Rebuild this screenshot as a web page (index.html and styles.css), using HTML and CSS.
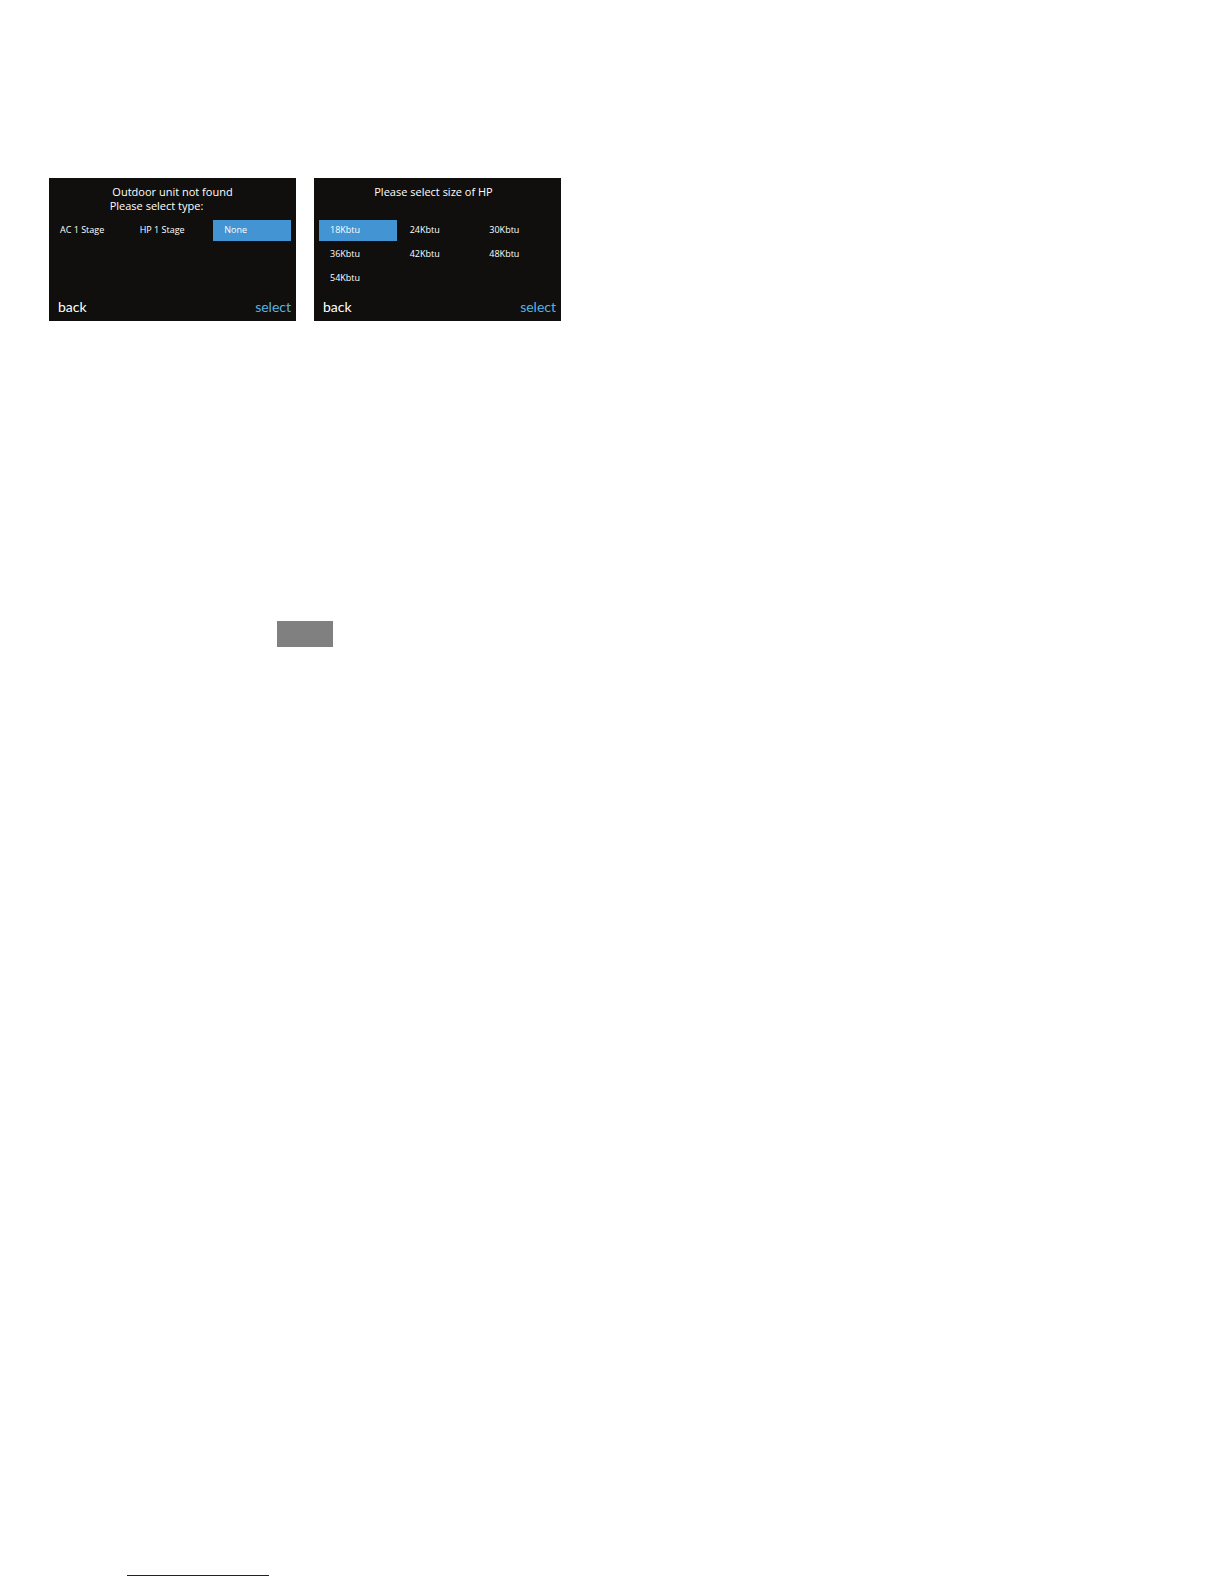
FILE: index.html
```html
<!DOCTYPE html>
<html lang="en">
<head>
<meta charset="UTF-8">
<meta name="viewport" content="width=device-width, initial-scale=1.0">
<title>Outdoor unit setup</title>
<link rel="stylesheet" href="styles.css">
</head>
<body>
<main>
  <div class="screens">
    <section class="screen">
      <h2 class="title">Outdoor unit not found<span class="second-line">Please select type:</span></h2>
      <div class="options type-options">
        <button type="button">AC 1 Stage</button>
        <button type="button">HP 1 Stage</button>
        <button type="button" class="selected">None</button>
      </div>
      <div class="actions">
        <button type="button">back</button>
        <button type="button" class="select">select</button>
      </div>
    </section>
    <section class="screen">
      <h2 class="title size-title">Please select size of HP</h2>
      <div class="options">
        <button type="button" class="selected">18Kbtu</button>
        <button type="button">24Kbtu</button>
        <button type="button">30Kbtu</button>
        <button type="button">36Kbtu</button>
        <button type="button">42Kbtu</button>
        <button type="button">48Kbtu</button>
        <button type="button">54Kbtu</button>
      </div>
      <div class="actions">
        <button type="button">back</button>
        <button type="button" class="select">select</button>
      </div>
    </section>
  </div>
  <div class="gray-box"></div>
</main>
<footer>
  <div class="footer-line"></div>
</footer>
</body>
</html>
```

FILE: styles.css
```css
* {
  box-sizing: border-box;
}
body {
  margin: 0;
  min-height: 100vh;
  display: flex;
  flex-direction: column;
  justify-content: space-between;
  background-color: #fff;
  font-family: "Open Sans", "Noto Sans", sans-serif;
}
main {
  padding: 178px 49px 0;
}
.screens {
  display: flex;
  flex-wrap: wrap;
  gap: 18px;
}
/* Thermostat screens */
.screen {
  width: 247px;
  min-height: 143px;
  padding: 7px 5px 5px;
  display: flex;
  flex-direction: column;
  background-color: #100f0d;
  color: #fff;
}
.title {
  margin: 0;
  min-height: 35px;
  font-size: 11px;
  font-weight: 400;
  line-height: 14px;
  text-align: center;
}
.second-line {
  display: block;
  padding-right: 32px;
}
.size-title {
  padding-right: 8px;
}
button {
  padding: 0;
  border: none;
  background: none;
  color: inherit;
  font-family: inherit;
  cursor: pointer;
}
.options {
  display: grid;
  grid-template-columns: repeat(3, 1fr);
  gap: 3px 2px;
}
.options button {
  height: 21px;
  padding: 0 0 2px 11px;
  font-size: 9px;
  line-height: 19px;
  text-align: left;
}
.type-options button {
  padding-left: 6px;
}
.options .selected {
  padding-left: 11px;
  background-color: #4394d3;
}
.actions {
  display: flex;
  justify-content: space-between;
  margin-top: auto;
  padding-left: 4px;
}
.actions button {
  font-family: Lato, "Open Sans", sans-serif;
  font-size: 14px;
  line-height: 18px;
}
.actions .select {
  color: #55b4e2;
}
.gray-box {
  width: 56px;
  height: 26px;
  margin: 300px 0 0 228px;
  background-color: #808080;
}
footer {
  padding: 0 127px 8px;
}
.footer-line {
  width: 142px;
  border-bottom: 1px solid #14148c;
}
```
